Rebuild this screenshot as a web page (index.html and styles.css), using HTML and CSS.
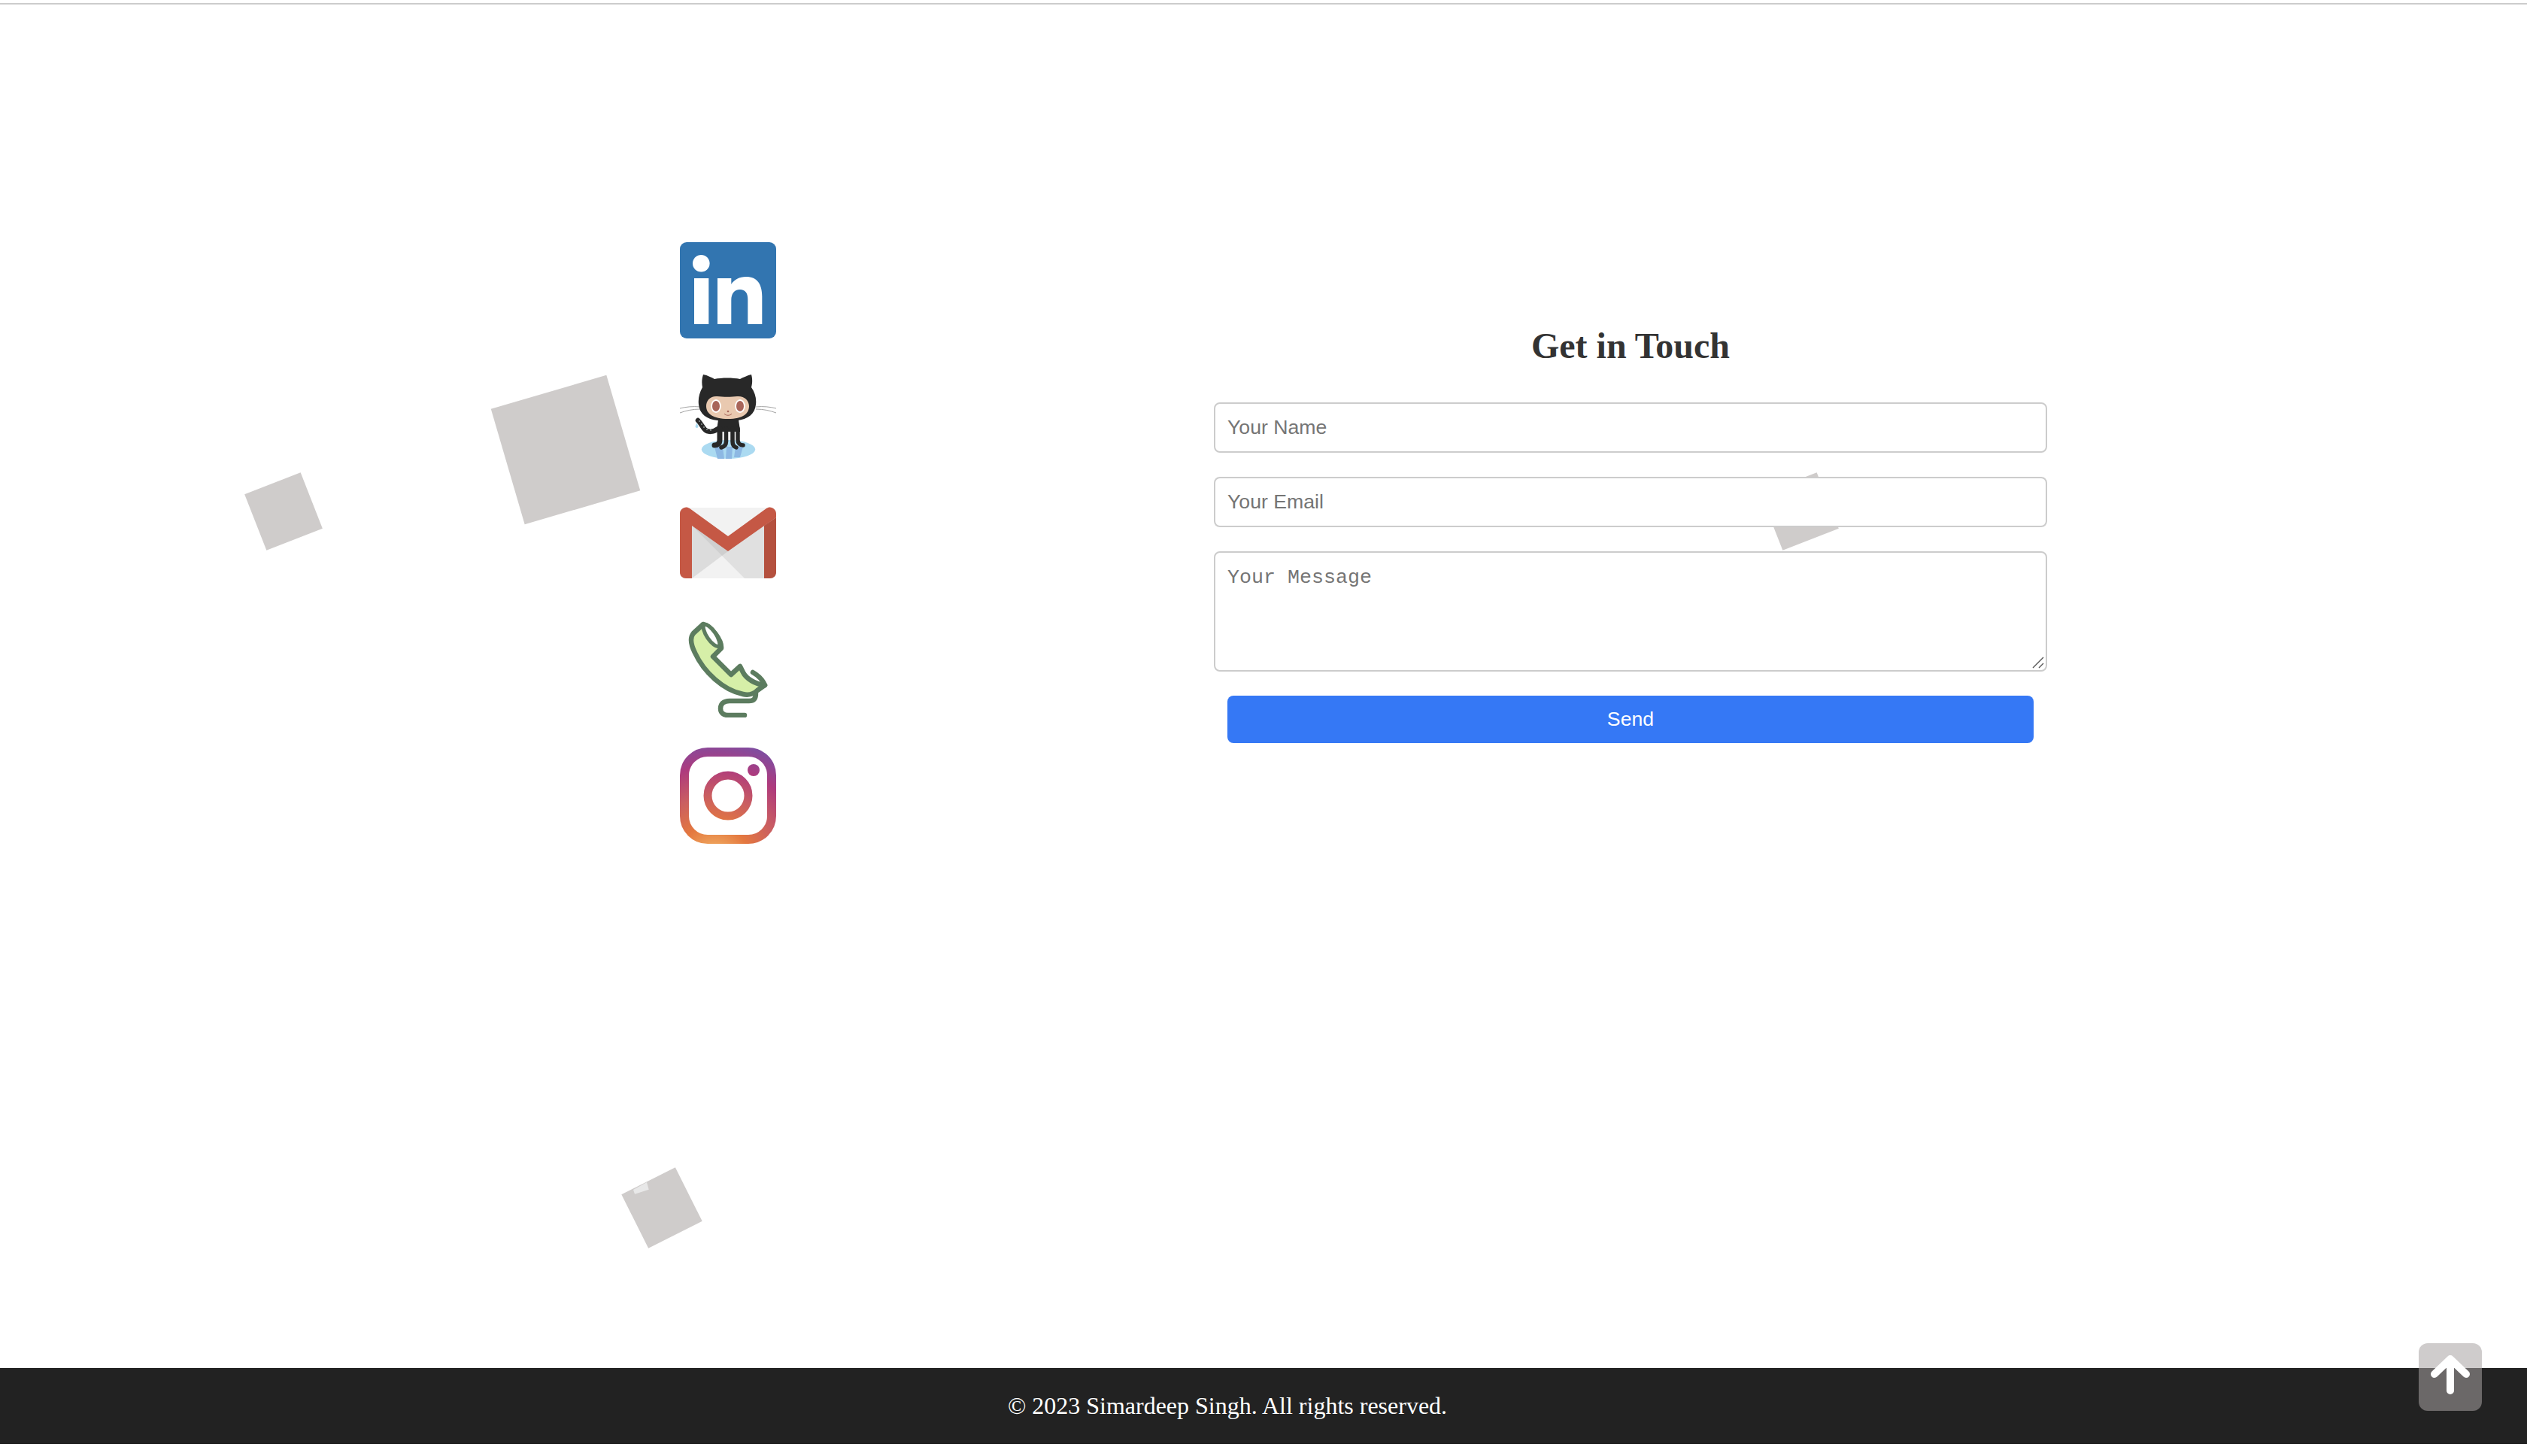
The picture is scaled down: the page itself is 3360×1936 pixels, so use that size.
FILE: index.html
```html
<!DOCTYPE html>
<html lang="en">
<head>
  <meta charset="UTF-8" />
  <meta name="viewport" content="width=device-width, initial-scale=1.0"/>
  <title>Contact</title>
  <link rel="stylesheet" href="styles.css">
</head>
<body>
  <div class="top-bar"></div>

  <div class="shape shape-big"></div>
  <div class="shape shape-left"></div>
  <div class="shape shape-form"></div>
  <div class="shape shape-bottom"></div>
  <svg class="shape-patch" width="24" height="20" viewBox="0 0 24 20"><polygon points="2,12 20,2 22.7,11.7 4,17.7" fill="#e8e8e8"/></svg>

  <main class="contact">
    <div class="socials">
      <a class="social" href="#" aria-label="LinkedIn">
        <svg width="128" height="128" viewBox="0 0 128 128">
          <rect width="128" height="128" rx="9" fill="#3275b0"/>
          <circle cx="28.3" cy="28.3" r="11.3" fill="#fff"/>
          <rect x="19" y="48" width="19.3" height="61" fill="#fff"/>
          <path fill="#fff" d="M50 48H68.3V56C72 50 79 46 88 46C103 46 109.3 56 109.3 72V109H90.3V76C90.3 68 87 63 80 63C72 63 68.3 69 68.3 77V109H50Z"/>
        </svg>
      </a>
      <a class="social" href="#" aria-label="GitHub">
        <svg width="128" height="128" viewBox="0 0 128 128">
          <ellipse cx="64.5" cy="107.5" rx="35.7" ry="12.5" fill="#abdaf1"/>
          <path fill="#8db8e3" d="M46 104H57L59 120H50ZM62 104H70L69 120H61ZM74 104H84L80 118H72Z"/>
          <g fill="none" stroke="#999" stroke-width="0.9">
            <path d="M0 53C8 51 17 50 27 51"/>
            <path d="M0 59C8 56 17 54 27 54"/>
            <path d="M128 53C120 51 111 50 101 51"/>
            <path d="M128 59C120 56 111 54 101 54"/>
          </g>
          <path fill="#282828" d="M51 66H78C78 72 80 78 80 84H49C49 78 51 72 51 66Z"/>
          <g fill="none" stroke="#282828" stroke-linecap="round">
            <path stroke-width="6.5" d="M24 69C28 73 30 78 33 81C37 85 44 85 51 80"/>
            <path stroke-width="7" d="M53 80V95C53 100 50 102 46 102"/>
            <path stroke-width="5.5" d="M61.5 80V97C61.5 101 59 104 55 105"/>
            <path stroke-width="5.5" d="M70 80V97C70 101 72 104 75 105"/>
            <path stroke-width="5.5" d="M77 80V95C77 99 80 102 84 102"/>
          </g>
          <path fill="#282828" d="M31 8C37 9 42 12 46 14C56 12 70 12 80 14C84 12 90 9 95 8C97 15 96 21 95 25C100 32 102 40 101 48C100 60 90 68 76 69H50C36 68 26 60 25 48C24 40 26 32 30 25C29 20 29 14 31 8Z"/>
          <path fill="#e9c9b0" d="M50 37C58 38 68 38 76 37C85 36 92 42 92 50C92 60 84 67 64 67C44 67 35 60 35 50C35 42 41 36 50 37Z"/>
          <ellipse cx="48" cy="50" rx="6.8" ry="9" fill="#fff"/>
          <ellipse cx="80" cy="50" rx="6.8" ry="9" fill="#fff"/>
          <ellipse cx="48" cy="50" rx="5" ry="7" fill="#a8655a"/>
          <ellipse cx="80" cy="50" rx="5" ry="7" fill="#a8655a"/>
          <circle cx="64" cy="57" r="1.3" fill="#a8655a"/>
          <path d="M59 60C61 63 67 63 69 60" fill="none" stroke="#a8655a" stroke-width="1"/>
          <g fill="#cfe0dc">
            <circle cx="26" cy="70" r="0.8"/><circle cx="29" cy="74" r="0.8"/><circle cx="32" cy="78" r="0.8"/><circle cx="36" cy="81" r="0.8"/><circle cx="41" cy="82" r="0.8"/>
          </g>
          <path fill="#abdaf1" d="M22.5 72L24.5 77A2 2 0 0 1 20.5 77Z"/>
        </svg>
      </a>
      <a class="social" href="#" aria-label="Gmail">
        <svg width="128" height="128" viewBox="0 0 128 128">
          <path fill="#e0e0e0" d="M8 17H120A8 8 0 0 1 128 25V103A8 8 0 0 1 120 111H8A8 8 0 0 1 0 103V25A8 8 0 0 1 8 17Z"/>
          <path fill="#dcdcdc" d="M16 41L56 81L16 111Z"/>
          <path fill="#cfcfcf" d="M16 41L64 75L56 81Z"/>
          <path fill="#f2f2f2" d="M16 111L56 81L86 111Z"/>
          <path fill="#f2f2f2" d="M8 17H120L64 56Z"/>
          <path fill="#c55845" d="M0 25C0 18 8 14 13 18L64 55L115 18C120 14 128 18 128 25V30L64 75L16 41V111H8A8 8 0 0 1 0 103Z"/>
          <path fill="#b4503e" d="M128 30V103A8 8 0 0 1 120 111H112V41Z"/>
        </svg>
      </a>
      <a class="social" href="#" aria-label="Phone">
        <svg width="128" height="128" viewBox="0 0 128 128">
          <path fill="#d6efa8" stroke="#5c7c5f" stroke-width="6.5" stroke-linejoin="round" d="M31 4L18 16C13 22 15 32 20 42C32 68 58 92 84 97C92 99 99 96 103 92L113 85C100 84 88 76 84 68L80 60L68 71L44 47L55 36C56 26 42 6 31 4Z"/>
          <ellipse cx="42" cy="19" rx="6" ry="17" transform="rotate(-34 42 19)" fill="#fff" stroke="#5c7c5f" stroke-width="5"/>
          <g fill="none" stroke="#5c7c5f" stroke-width="6.5" stroke-linecap="round">
            <path d="M97 68C104 72 110 78 113 85"/>
            <path d="M101 96C101 103 98 106 92 106H66C58 106 54 110 54 116C54 122 58 125 64 125H86"/>
          </g>
        </svg>
      </a>
      <a class="social" href="#" aria-label="Instagram">
        <svg width="128" height="128" viewBox="0 0 128 128">
          <defs>
            <radialGradient id="insta" gradientUnits="userSpaceOnUse" cx="45" cy="150" r="160">
              <stop offset="0" stop-color="#f5c06f"/>
              <stop offset="0.3" stop-color="#e4783f"/>
              <stop offset="0.55" stop-color="#c95d62"/>
              <stop offset="0.78" stop-color="#ae3a7d"/>
              <stop offset="1" stop-color="#7d4ea2"/>
            </radialGradient>
          </defs>
          <rect x="6" y="6" width="116" height="116" rx="31" fill="none" stroke="url(#insta)" stroke-width="12"/>
          <circle cx="64" cy="64" r="27" fill="none" stroke="url(#insta)" stroke-width="11"/>
          <circle cx="98" cy="30" r="8" fill="url(#insta)"/>
        </svg>
      </a>
    </div>

    <form class="contact-form">
      <h2>Get in Touch</h2>
      <input type="text" placeholder="Your Name" />
      <input type="email" placeholder="Your Email" />
      <div class="message-box">
        <textarea placeholder="Your Message"></textarea>
        <svg class="resize-grip" width="16" height="16" viewBox="0 0 16 16">
          <path d="M1 15L15 1M9 15L15 9" fill="none" stroke="#555" stroke-width="1.4"/>
        </svg>
      </div>
      <button type="button">Send</button>
    </form>
  </main>

  <footer class="footer">&copy; 2023 Simardeep Singh. All rights reserved.</footer>

  <a class="to-top" href="#" aria-label="Back to top">
    <svg width="84" height="90" viewBox="0 0 84 90">
      <path d="M42 22V63M21 41L42 21L63 41" fill="none" stroke="#fff" stroke-width="10" stroke-linecap="round" stroke-linejoin="round"/>
    </svg>
  </a>
</body>
</html>
```

FILE: styles.css
```css
body {
  margin: 0;
  height: 1936px;
  box-sizing: border-box;
  padding-bottom: 16px;
  display: flex;
  flex-direction: column;
  overflow: hidden;
  background: #fff;
  font-family: "Liberation Serif", serif;
}
.top-bar {
  height: 4px;
  border-bottom: 2px solid #ccc;
}
.contact {
  flex: 1;
  display: flex;
  align-items: flex-start;
  padding: 316px 0 0 904px;
}
.socials {
  display: flex;
  flex-direction: column;
  gap: 40px;
}
.social {
  display: block;
  width: 128px;
  height: 128px;
}
.social svg {
  display: block;
}
.contact-form {
  width: 1108px;
  margin: 110px 0 0 582px;
  display: flex;
  flex-direction: column;
  gap: 32px;
}
.contact-form h2 {
  margin: 0 0 16px;
  text-align: center;
  font-size: 48px;
  line-height: 55px;
  font-weight: bold;
  color: #333;
}
.contact-form input,
.contact-form textarea {
  box-sizing: border-box;
  width: 100%;
  margin: 0;
  padding: 16px;
  border: 2px solid #ccc;
  border-radius: 8px;
  background: #fff;
  font-size: 26.67px;
}
.contact-form input {
  height: 67px;
  font-family: "Liberation Sans", Arial, sans-serif;
}
.contact-form textarea {
  height: 160px;
  display: block;
  padding-top: 18px;
  resize: none;
  font-family: "Liberation Mono", monospace;
}
.message-box {
  position: relative;
}
.resize-grip {
  position: absolute;
  right: 4px;
  bottom: 4px;
}
.contact-form button {
  width: 1072px;
  height: 63px;
  align-self: center;
  border: none;
  border-radius: 8px;
  background: #3578f5;
  color: #fff;
  font-family: "Liberation Sans", Arial, sans-serif;
  font-size: 26.67px;
}
.footer {
  padding: 32px 96px 32px 0;
  background: #222;
  color: #fff;
  font-size: 32px;
  line-height: 37px;
  text-align: center;
}
.shape {
  position: absolute;
  z-index: -1;
  width: 80px;
  height: 80px;
  background: #cfcccb;
}
.shape-big {
  left: 672px;
  top: 518px;
  width: 160px;
  height: 160px;
  transform: rotate(-16.3deg);
}
.shape-left {
  left: 336.5px;
  top: 639.5px;
  transform: rotate(-21.4deg);
}
.shape-form {
  left: 2352.5px;
  top: 639.5px;
  transform: rotate(-21.4deg);
}
.shape-bottom {
  left: 840px;
  top: 1566px;
  transform: rotate(-26.6deg);
}
.shape-patch {
  position: absolute;
  z-index: -1;
  left: 840px;
  top: 1570px;
}
.to-top {
  position: fixed;
  right: 60px;
  bottom: 60px;
  width: 84px;
  height: 90px;
  border-radius: 12px;
  background: rgba(167, 163, 162, 0.55);
}
.to-top svg {
  display: block;
}
```
